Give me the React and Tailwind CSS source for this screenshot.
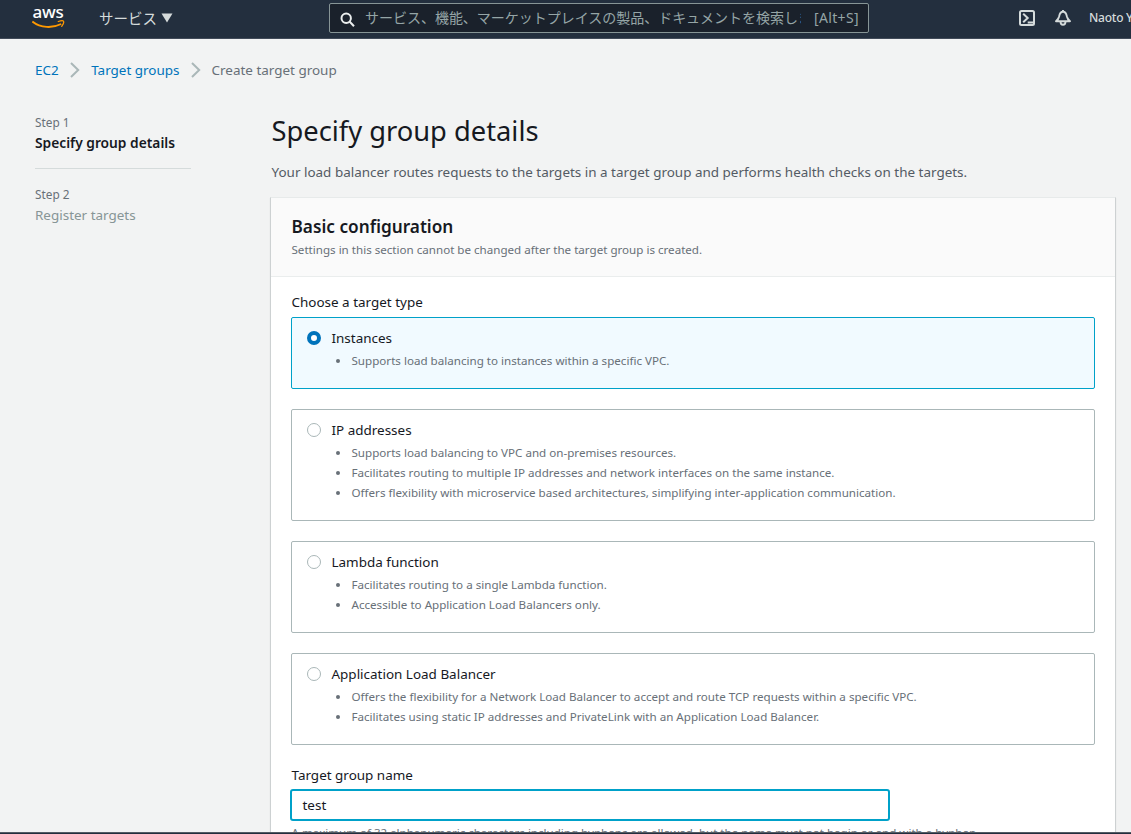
const targetTypes = [
  { label: 'Instances', selected: true, items: ['Supports load balancing to instances within a specific VPC.'] },
  {
    label: 'IP addresses',
    items: [
      'Supports load balancing to VPC and on-premises resources.',
      'Facilitates routing to multiple IP addresses and network interfaces on the same instance.',
      'Offers flexibility with microservice based architectures, simplifying inter-application communication.',
    ],
  },
  {
    label: 'Lambda function',
    items: ['Facilitates routing to a single Lambda function.', 'Accessible to Application Load Balancers only.'],
  },
  {
    label: 'Application Load Balancer',
    items: [
      'Offers the flexibility for a Network Load Balancer to accept and route TCP requests within a specific VPC.',
      'Facilitates using static IP addresses and PrivateLink with an Application Load Balancer.',
    ],
  },
];

function AwsLogo() {
  return (
    <div className="flex w-[34px] flex-col items-center">
      <span className="-ml-0.5 h-[14px] text-[17px] leading-[10px] font-medium tracking-[-0.3px] text-white">aws</span>
      <svg className="-mt-px h-[9px] w-[34px]" viewBox="0 0 34 9" fill="none">
        <path d="M.3 1.500C8.700 8.200 20.500 8.400 29.200 4" stroke="#f90" strokeWidth="1.900" />
        <path d="M26.300 1.500c2.300-.8 4.600-1 5.100-.4.500.7-.2 3.300-1.700 5.200" stroke="#f90" strokeWidth="1.300" strokeLinecap="round" />
      </svg>
    </div>
  );
}

function Header() {
  return (
    <header className="flex h-[39px] shrink-0 items-start overflow-hidden border-b border-[#414b59] bg-[#232f3e] pl-8 text-[#d5dbdb]">
      <div className="pt-[7px]">
        <AwsLogo />
      </div>
      <button className="mt-2 ml-[33px] flex items-center gap-[5px] text-[14.5px] leading-5">
        <span className="w-[57px] text-left whitespace-nowrap">サービス</span>
        <svg className="h-[10px] w-[12px]" viewBox="0 0 12 10">
          <path d="M.5.500h11L6 9.500z" fill="currentColor" />
        </svg>
      </button>
      <div className="mt-[3px] ml-[156px] flex h-[30px] w-[540px] shrink-0 items-center rounded-[2px] border border-[#879596] bg-[#1a212b] pr-[9px] pl-[10px]">
        <svg className="mt-[3px] h-[15px] w-[15px] shrink-0" viewBox="0 0 15 15" fill="none" stroke="#eaeded" strokeWidth="2">
          <circle cx="6.200" cy="6.200" r="4.700" />
          <path d="m9.500 9.500 4.500 4.700" />
        </svg>
        <span className="ml-[10px] w-[436px] shrink-0 overflow-hidden text-[14px] leading-5 tracking-[-0.02px] whitespace-nowrap text-[#95a5a6]">
          サービス、機能、マーケットプレイスの製品、ドキュメントを検索しま
        </span>
        <span className="ml-auto text-[14px] leading-5 tracking-[0.36px] text-[#95a5a6]">[Alt+S]</span>
      </div>
      <svg className="mt-[10px] ml-[150px] h-4 w-4 shrink-0" viewBox="0 0 16 16" fill="none" stroke="currentColor" strokeWidth="2">
        <rect x="1" y="1" width="14" height="14" rx="1.500" />
        <path d="m4.200 3.700 4.500 4.300-4.500 4.300M8.700 12.500h5.800" />
      </svg>
      <svg className="mt-[9px] ml-5 h-[17px] w-4 shrink-0" viewBox="0 0 16 17" fill="none" stroke="currentColor" strokeWidth="1.900" strokeLinejoin="round">
        <path d="M1 12.200c2.300-1.800 2.800-3.200 3.200-5C4.700 4.400 6 2.800 8 2.800s3.300 1.600 3.800 4.400c.4 1.800.9 3.200 3.200 5z" />
        <path d="M8 3V1M5.500 12.500c0 4.300 5 4.300 5 0" />
      </svg>
      <span className="mt-2 ml-[18px] text-[12px] leading-5 font-medium tracking-[-0.24px] whitespace-nowrap">Naoto Y</span>
    </header>
  );
}

function Separator() {
  return (
    <svg className="h-4 w-[10px]" viewBox="0 0 10 16" fill="none" stroke="#aab7b8" strokeWidth="2">
      <path d="m1 1 7.200 7L1 15" />
    </svg>
  );
}

function TargetOption({ option }) {
  return (
    <div
      className={
        'flex rounded-[2px] border pt-[10px] pb-[17px] pl-[15px] ' +
        (option.selected ? 'border-[#00a1c9] bg-[#f1faff]' : 'border-[#aab7b8] bg-white')
      }
    >
      <span
        className={
          'mt-[3px] h-[14px] w-[14px] shrink-0 rounded-full bg-white ' +
          (option.selected ? 'border-4 border-[#0073bb]' : 'border border-[#aab7b8]')
        }
      />
      <div className="ml-[10px]">
        <div className="pl-[0.5px] leading-5 text-[#16191f]">{option.label}</div>
        <ul className="mt-[3px] text-[11.62px] leading-5 text-[#687078]">
          {option.items.map((item) => (
            <li key={item} className="flex items-center whitespace-nowrap">
              <span className="mr-[11.5px] ml-[5px] h-1 w-1 rounded-full bg-[#687078]" />
              {item}
            </li>
          ))}
        </ul>
      </div>
    </div>
  );
}

export default function App() {
  return (
    <div className="flex h-[834px] w-full flex-col overflow-hidden bg-[#f2f3f3] font-['Noto_Sans','Noto_Sans_CJK_JP',sans-serif] text-[13.46px] text-[#16191f]">
      <Header />
      <div className="min-h-0 flex-1 overflow-hidden">
        <nav className="flex items-center pt-[21px] pl-[35px] leading-5 text-[#0073bb]">
          <a>EC2</a>
          <span className="mr-[11.5px] ml-[11px] flex">
            <Separator />
          </span>
          <a>Target groups</a>
          <span className="mr-[11px] ml-[11px] flex">
            <Separator />
          </span>
          <span className="text-[#687078]">Create target group</span>
        </nav>
        <div className="flex pl-[35px]">
          <aside className="w-[156px] shrink-0 pt-8">
            <div className="text-[11.8px] leading-5 text-[#687078]">Step 1</div>
            <div className="pt-px text-[13.77px] leading-5 font-semibold whitespace-nowrap">Specify group details</div>
            <div className="mt-[15px] border-t border-[#d5dbdb] pt-[15px] text-[11.8px] leading-5 text-[#687078]">Step 2</div>
            <div className="pt-px leading-5 text-[#879596]">Register targets</div>
          </aside>
          <main className="ml-[79px] w-[846px] shrink-0 pt-[33px]">
            <h1 className="pl-[1.500px] text-[27.3px] leading-9">Specify group details</h1>
            <p className="mt-[13px] pl-[1.500px] leading-5 whitespace-nowrap text-[#545b64]">
              Your load balancer routes requests to the targets in a target group and performs health checks on the targets.
            </p>
            <section className="mt-[15px] border border-[#cdd1d2] border-t-[#e7eaea] bg-white shadow-[0_1px_1px_rgba(0,28,36,0.1)]">
              <header className="h-[79px] border-b border-[#eaeded] bg-[#fafafa] px-5 pt-[18px]">
                <h2 className="pl-[0.5px] text-[17.23px] leading-[22px] font-semibold">Basic configuration</h2>
                <p className="mt-0.5 pl-[0.5px] text-[11.6px] leading-5 text-[#687078]">
                  Settings in this section cannot be changed after the target group is created.
                </p>
              </header>
              <div className="px-5 pt-[15px]">
                <div className="pl-[0.5px] leading-5">Choose a target type</div>
                <div className="mt-[5px] flex flex-col gap-5">
                  {targetTypes.map((option) => (
                    <TargetOption key={option.label} option={option} />
                  ))}
                </div>
                <div className="mt-5 pl-[0.5px] leading-5">Target group name</div>
                <div className="mt-1 -ml-px flex h-8 w-[600px] items-center rounded-[3px] border-2 border-[#00a1c9] bg-white pl-[10.5px]">
                  test
                </div>
                <p className="mt-0.5 pl-[0.5px] text-[11.55px] leading-5 whitespace-nowrap text-[#687078]">
                  A maximum of 32 alphanumeric characters including hyphens are allowed, but the name must not begin or end with a hyphen.
                </p>
              </div>
            </section>
          </main>
        </div>
      </div>
      <footer className="h-0.5 shrink-0 border-t border-[#545b64] bg-[#232f3e]" />
    </div>
  );
}
